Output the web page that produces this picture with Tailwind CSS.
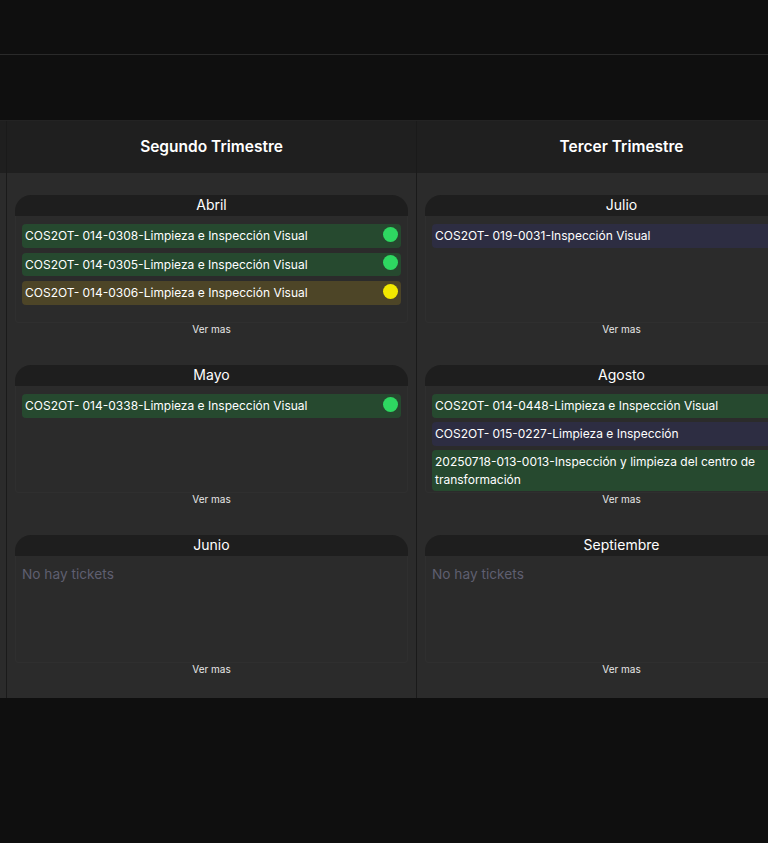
<!DOCTYPE html>
<html lang="en">
<head>
    <meta charset="UTF-8">
    <meta name="viewport" content="width=device-width, initial-scale=1.0">
    <title>Tickets por trimestre</title>
    <script src="https://cdn.jsdelivr.net/npm/@tailwindcss/browser@4"></script>
</head>
<body class="w-[768px] h-[843px] overflow-hidden bg-[#0f0f0f] font-['Inter',sans-serif] text-white">
    <!-- Top bar -->
    <div class="h-[55px] border-b border-[#2a2a2a]"></div>
    <div class="h-[65px]"></div>

    <!-- Quarter columns -->
    <div class="flex h-[578px] overflow-hidden border-t border-[#232323]">
        <div class="w-[7px] shrink-0 flex flex-col border-r border-[#1a1a1a]">
            <div class="h-[52px] shrink-0 bg-[#1f1f1f]"></div>
            <div class="flex-1 bg-[#2b2b2b]"></div>
        </div>

        <!-- Segundo Trimestre -->
        <div class="w-[410px] shrink-0 flex flex-col border-r border-[#1a1a1a]">
            <div class="h-[52px] shrink-0 bg-[#1f1f1f] flex items-center justify-center text-[15.5px] font-semibold">Segundo Trimestre</div>
            <div class="flex-1 bg-[#2b2b2b] pt-[22px] pl-2 pr-2">
                <div class="h-[170px]">
                    <div class="h-[21px] pb-[1px] bg-[#1e1e1e] rounded-t-2xl flex items-center justify-center text-sm">Abril</div>
                    <div class="h-[107px] overflow-hidden pt-2 px-[6px] flex flex-col gap-[5px] border-x border-b border-white/[0.02] rounded-b">
                        <div class="flex items-center justify-between bg-[#26492f] rounded-sm px-[3px] py-[3px] text-xs leading-[17.5px]">
                            <span>COS2OT- 014-0308-Limpieza e Inspección Visual</span>
                            <span class="w-[15px] h-[15px] rounded-full bg-[#2ed861] shrink-0 mt-[-3px]"></span>
                        </div>
                        <div class="flex items-center justify-between bg-[#26492f] rounded-sm px-[3px] py-[3px] text-xs leading-[17.5px]">
                            <span>COS2OT- 014-0305-Limpieza e Inspección Visual</span>
                            <span class="w-[15px] h-[15px] rounded-full bg-[#2ed861] shrink-0 mt-[-3px]"></span>
                        </div>
                        <div class="flex items-center justify-between bg-[#4d4527] rounded-sm px-[3px] py-[3px] text-xs leading-[17.5px]">
                            <span>COS2OT- 014-0306-Limpieza e Inspección Visual</span>
                            <span class="w-[15px] h-[15px] rounded-full bg-[#f2e800] shrink-0 mt-[-3px]"></span>
                        </div>
                    </div>
                    <div class="text-center text-[10px] leading-4 mt-[-2px] text-[#e8e8e8]">Ver mas</div>
                </div>
                <div class="h-[170px]">
                    <div class="h-[21px] pb-[1px] bg-[#1e1e1e] rounded-t-2xl flex items-center justify-center text-sm">Mayo</div>
                    <div class="h-[107px] overflow-hidden pt-2 px-[6px] flex flex-col gap-[5px] border-x border-b border-white/[0.02] rounded-b">
                        <div class="flex items-center justify-between bg-[#26492f] rounded-sm px-[3px] py-[3px] text-xs leading-[17.5px]">
                            <span>COS2OT- 014-0338-Limpieza e Inspección Visual</span>
                            <span class="w-[15px] h-[15px] rounded-full bg-[#2ed861] shrink-0 mt-[-3px]"></span>
                        </div>
                    </div>
                    <div class="text-center text-[10px] leading-4 mt-[-2px] text-[#e8e8e8]">Ver mas</div>
                </div>
                <div class="h-[170px]">
                    <div class="h-[21px] pb-[1px] bg-[#1e1e1e] rounded-t-2xl flex items-center justify-center text-sm">Junio</div>
                    <div class="h-[107px] overflow-hidden pt-2 px-[6px] border-x border-b border-white/[0.02] rounded-b">
                        <p class="text-[13.7px] text-[#5f5f70]">No hay tickets</p>
                    </div>
                    <div class="text-center text-[10px] leading-4 mt-[-2px] text-[#e8e8e8]">Ver mas</div>
                </div>
            </div>
        </div>

        <!-- Tercer Trimestre -->
        <div class="w-[409px] shrink-0 flex flex-col">
            <div class="h-[52px] shrink-0 bg-[#1f1f1f] flex items-center justify-center text-[15.5px] font-semibold">Tercer Trimestre</div>
            <div class="flex-1 bg-[#2b2b2b] pt-[22px] pl-2 pr-2">
                <div class="h-[170px]">
                    <div class="h-[21px] pb-[1px] bg-[#1e1e1e] rounded-t-2xl flex items-center justify-center text-sm">Julio</div>
                    <div class="h-[107px] overflow-hidden pt-2 px-[6px] flex flex-col gap-[5px] border-x border-b border-white/[0.02] rounded-b">
                        <div class="bg-[#2d2d42] rounded-sm px-[3px] py-[3px] text-xs leading-[17.5px]">COS2OT- 019-0031-Inspección Visual</div>
                    </div>
                    <div class="text-center text-[10px] leading-4 mt-[-2px] text-[#e8e8e8]">Ver mas</div>
                </div>
                <div class="h-[170px]">
                    <div class="h-[21px] pb-[1px] bg-[#1e1e1e] rounded-t-2xl flex items-center justify-center text-sm">Agosto</div>
                    <div class="h-[107px] overflow-hidden pt-2 px-[6px] flex flex-col gap-[4.5px] border-x border-b border-white/[0.02] rounded-b">
                        <div class="bg-[#26492f] rounded-sm px-[3px] py-[3px] text-xs leading-[17.5px]">COS2OT- 014-0448-Limpieza e Inspección Visual</div>
                        <div class="bg-[#2d2d42] rounded-sm px-[3px] py-[3px] text-xs leading-[17.5px]">COS2OT- 015-0227-Limpieza e Inspección</div>
                        <div class="bg-[#26492f] rounded-sm px-[3px] py-[3px] text-xs leading-[17.5px]">20250718-013-0013-Inspección y limpieza del centro de transformación</div>
                    </div>
                    <div class="text-center text-[10px] leading-4 mt-[-2px] text-[#e8e8e8]">Ver mas</div>
                </div>
                <div class="h-[170px]">
                    <div class="h-[21px] pb-[1px] bg-[#1e1e1e] rounded-t-2xl flex items-center justify-center text-sm">Septiembre</div>
                    <div class="h-[107px] overflow-hidden pt-2 px-[6px] border-x border-b border-white/[0.02] rounded-b">
                        <p class="text-[13.7px] text-[#5f5f70]">No hay tickets</p>
                    </div>
                    <div class="text-center text-[10px] leading-4 mt-[-2px] text-[#e8e8e8]">Ver mas</div>
                </div>
            </div>
        </div>
    </div>
</body>
</html>
